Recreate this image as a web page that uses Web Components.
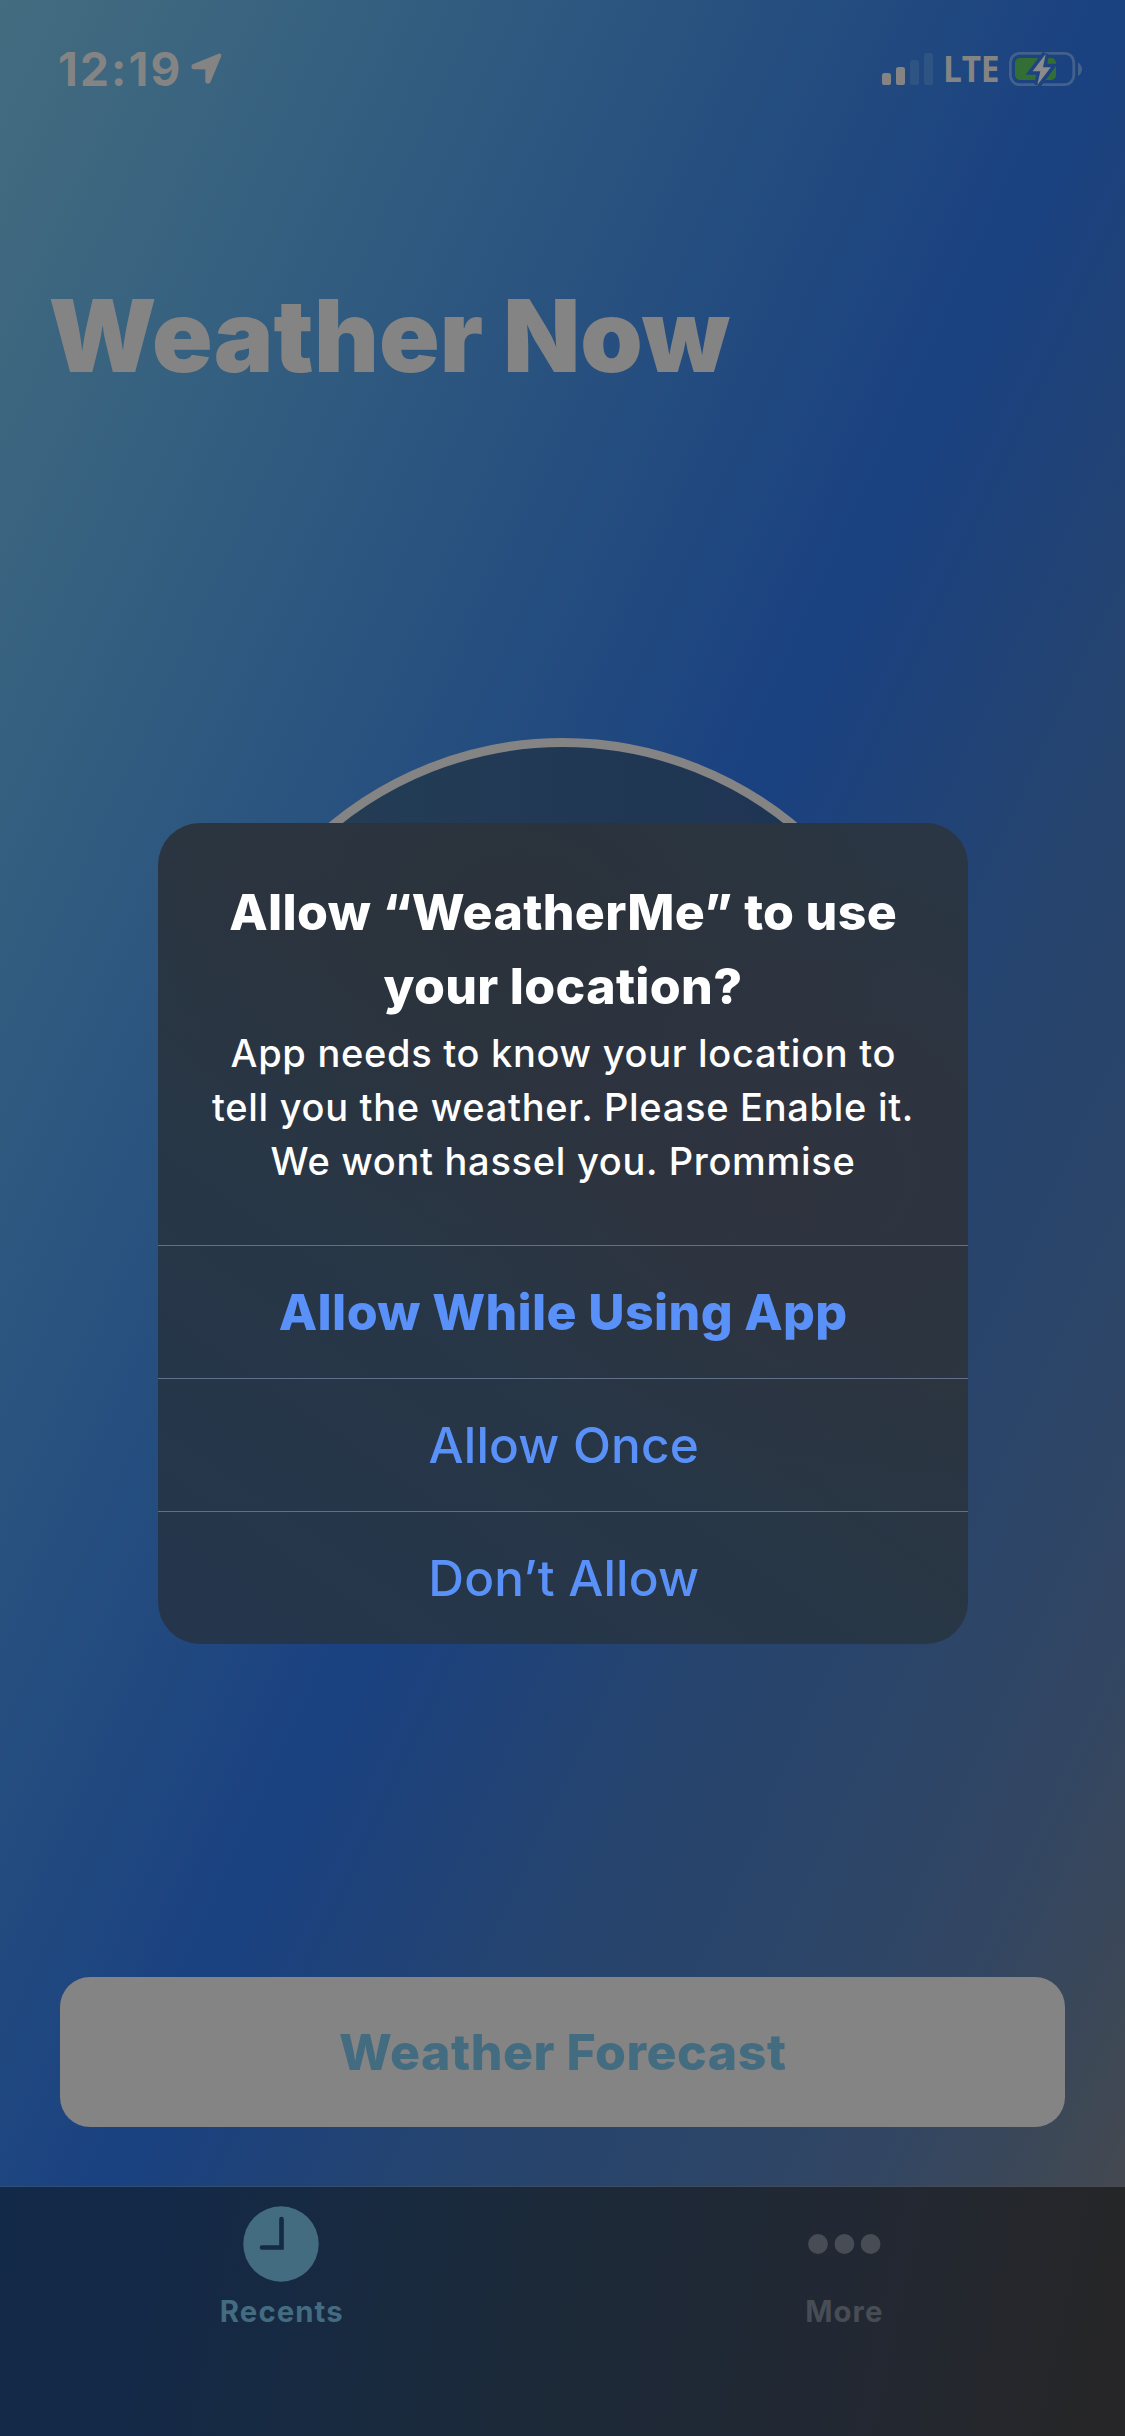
<!DOCTYPE html>
<html lang="en">
<head>
<meta charset="utf-8">
<title>Weather Now</title>
<style>
  html, body { margin: 0; padding: 0; }
  body { width: 1125px; height: 2436px; overflow: hidden; font-family: Inter, "Liberation Sans", sans-serif; }
</style>
</head>
<body>
<script>
const define = (name, markup) => customElements.define(name, class extends HTMLElement {
  constructor() {
    super();
    const t = document.createElement('template');
    t.innerHTML = markup;
    this.attachShadow({ mode: 'open' }).append(t.content.cloneNode(true));
  }
});

define('weather-screen', `
<style>
  :host { display: flex; flex-direction: column; position: relative; width: 1125px; height: 2436px; overflow: hidden;
    background: linear-gradient(to bottom right, #446c80 0%, #35607f 16%, #1a4180 50%, #26446e 65%, #2c4568 76%, #334662 84%, #3d4856 91%, #4b484c 98%); }
</style><slot></slot>`);

define('status-bar', `
<style>
  :host { display: flex; justify-content: space-between; height: 132px; box-sizing: border-box; padding: 42px 42px 0 58px; color: #848484; flex: none; }
  .left, .right { display: flex; align-items: flex-start; }
  .time { font: 750 46px/54px Inter, sans-serif; letter-spacing: 2.1px; width: 126px; white-space: nowrap; }
  .arrow { display: block; margin: 10px 0 0 5px; }
  .bars { display: block; margin: 10px 0 0; }
  .net { font: 700 36px/50px "Open Sans", sans-serif; letter-spacing: -.3px; width: 53.5px; margin: 2px 0 0 8.5px; transform: scaleX(.93); transform-origin: 0 0; }
  .battery { display: block; margin: 8px 0 0 12px; }
</style>
<div class="left">
  <span class="time">12:19</span>
  <svg class="arrow" width="34" height="34" viewBox="189 52 34 34"><path d="M219.4 55.6 L193.5 66.2 V67.3 L207.3 67.4 V81.4 L208.6 81.5Z" fill="currentColor" stroke="currentColor" stroke-width="4" stroke-linejoin="round"/></svg>
</div>
<div class="right">
  <svg class="bars" width="52" height="34" viewBox="882 52 52 34"><g fill="currentColor"><rect x="882" y="73" width="9" height="12" rx="2.6"/><rect x="896" y="67" width="9" height="18" rx="2.6"/></g><g fill="#2d5482"><rect x="910" y="60" width="9" height="25" rx="2.6"/><rect x="924" y="53" width="9" height="32" rx="2.6"/></g></svg>
  <span class="net">LTE</span>
  <svg class="battery" width="75" height="38" viewBox="1008 50 75 38">
    <rect x="1010.4" y="53.4" width="63.4" height="31.2" rx="9" fill="none" stroke="#43618b" stroke-width="2.8"/>
    <rect x="1015" y="58" width="41" height="22" rx="5" fill="#336f35"/>
    <path d="M1078 62.5 Q1082 65 1082 69.2 Q1082 73.5 1078 76Z" fill="#43618b"/>
    <path d="M1045.7 54 L1032.6 71.3 H1040.3 L1037.7 85 L1050.8 67.3 H1043Z" fill="#1d4480" stroke="#1d4480" stroke-width="7"/>
    <path d="M1045.7 54 L1032.6 71.3 H1040.3 L1037.3 85 L1050.8 67.3 H1043Z" fill="#8b8b8b"/>
  </svg>
</div>`);

define('page-title', `
<style>
  :host { display: block; flex: none; padding: 149.6px 0 1px 48.5px; font: 900 100px/108px Inter, sans-serif; letter-spacing: .1px; color: #848484; }
</style><slot></slot>`);

define('weather-dial', `
<style>
  :host { display: block; flex: none; box-sizing: border-box; width: 732px; height: 732px; margin: 347.4px auto 0; border: 9px solid #848484; border-radius: 50%;
    background: linear-gradient(to right, #253f55, #1d3253); }
</style>`);

define('forecast-button', `
<style>
  :host { display: flex; flex: none; align-items: center; justify-content: center; height: 150px; margin: 507px 60px 59px; border-radius: 30px; background: #848484;
    color: #446c80; font: 800 50px/60px Inter, sans-serif; letter-spacing: .5px; text-indent: .5px; }
</style><slot></slot>`);

define('tab-bar', `
<style>
  :host { display: flex; flex: 1; box-sizing: border-box; border-top: 1px solid transparent;
    background: linear-gradient(to right, #2d4f7b, #484a50) border-box;
    position: relative; }
  .fill { display: flex; flex: 1; background: linear-gradient(102deg, #132948 0%, #142947 15%, #192a3e 36%, #1c2938 50%, #222833 74%, #262628 96%); }
</style><div class="fill"><slot></slot></div>`);

define('tab-item', `
<style>
  :host { display: flex; flex: 1; flex-direction: column; align-items: center; color: #484c55; }
  :host([active]) { color: #446c80; }
  .icon { display: flex; align-items: center; height: 76px; margin-top: 19px; }
  .label { font: 650 29.3px/34px Inter, sans-serif; letter-spacing: 1.1px; text-indent: 1.1px; margin-top: 13px; }
</style>
<div class="icon"><slot name="icon"></slot></div><div class="label"><slot></slot></div>`);

define('clock-icon', `
<style>:host, svg { display: block; }</style>
<svg width="76" height="76" viewBox="0 0 76 76"><circle cx="38" cy="38" r="37.7" fill="currentColor"/><path d="M38.5 13 V41.5 H19" fill="none" stroke="#162945" stroke-width="4.6" stroke-linecap="round"/></svg>`);

define('more-icon', `
<style>:host, svg { display: block; }</style>
<svg width="74" height="20" viewBox="0 0 74 20" fill="currentColor"><circle cx="11" cy="10" r="9.9"/><circle cx="37.4" cy="10" r="9.9"/><circle cx="63.6" cy="10" r="9.9"/></svg>`);

define('permission-alert', `
<style>
  :host { display: flex; flex-direction: column; position: absolute; left: 158px; top: 823px; width: 810px; height: 821px; border-radius: 42px; overflow: hidden;
    background:
      radial-gradient(ellipse 380px 330px at 80% 42%, rgba(48,50,62,.7), rgba(48,50,62,0)),
      radial-gradient(ellipse 380px 300px at 45% 12%, rgba(43,49,58,.8), rgba(43,49,58,0)),
      linear-gradient(35deg, #25364c 8%, #283645 42%, #2b3540 60%, #2a3643 100%); }
  .copy { box-sizing: border-box; height: 422px; padding-top: 52.2px; text-align: center; color: #fff; }
  .actions { display: flex; flex-direction: column; }
</style>
<div class="copy"><slot name="copy"></slot></div>
<div class="actions"><slot></slot></div>`);

define('alert-title', `
<style>:host { display: block; font: 800 50px/74px Inter, sans-serif; letter-spacing: .32px; text-indent: .3px; }</style><slot></slot>`);

define('alert-message', `
<style>:host { display: block; margin-top: 2.5px; font: 550 38px/54px Inter, sans-serif; letter-spacing: .71px; text-indent: .7px; }</style><slot></slot>`);

define('alert-action', `
<style>
  :host { display: block; border-top: 1px solid #60708a; text-align: center; color: #5a91f8; font: 500 49.5px/132px Inter, sans-serif; letter-spacing: .2px; text-indent: 1.6px; }
  :host([preferred]) { font-weight: 800; font-size: 50px; letter-spacing: .36px; text-indent: .4px; }
</style><slot></slot>`);
</script>

<weather-screen>
  <status-bar></status-bar>
  <page-title>Weather Now</page-title>
  <weather-dial></weather-dial>
  <forecast-button>Weather Forecast</forecast-button>
  <tab-bar>
    <tab-item active><clock-icon slot="icon"></clock-icon>Recents</tab-item>
    <tab-item><more-icon slot="icon"></more-icon>More</tab-item>
  </tab-bar>
  <permission-alert>
    <alert-title slot="copy">Allow “WeatherMe” to use<br>your location?</alert-title>
    <alert-message slot="copy">App needs to know your location to<br>tell you the weather. Please Enable it.<br>We wont hassel you. Prommise</alert-message>
    <alert-action preferred>Allow While Using App</alert-action>
    <alert-action>Allow Once</alert-action>
    <alert-action>Don’t Allow</alert-action>
  </permission-alert>
</weather-screen>
</body>
</html>
